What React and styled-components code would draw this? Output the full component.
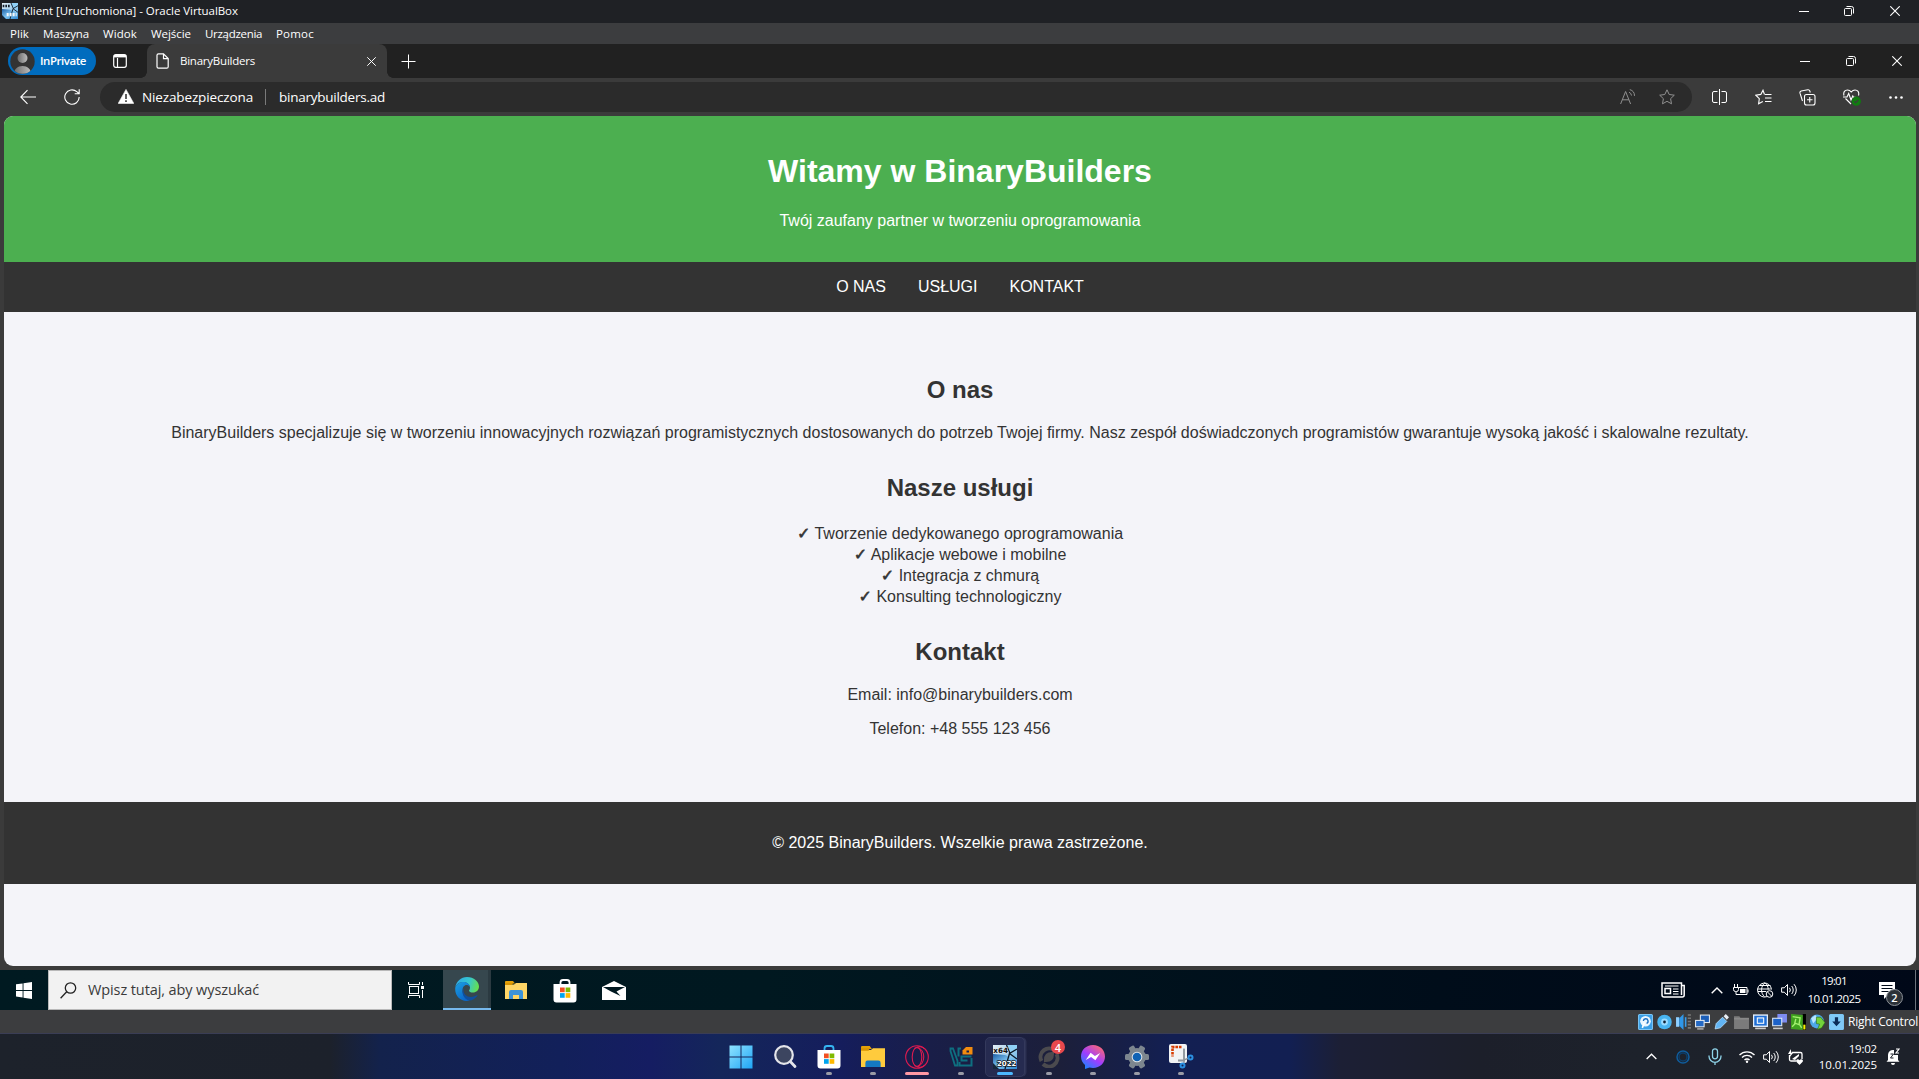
import React from "react";
import styled, { createGlobalStyle, css } from "styled-components";

const Global = createGlobalStyle`
  *, *::before, *::after { box-sizing: border-box; }
  body { margin: 0; background: #3b3b3b; overflow: hidden; }
  svg { display: block; flex: none; }
`;

const ui = `"Open Sans", "Noto Sans", sans-serif`;
const arial = `"Liberation Sans", Arial, sans-serif`;

const Screen = styled.div`
  width: 1919px;
  height: 1079px;
  display: flex;
  flex-direction: column;
  overflow: hidden;
  background: #3b3b3b;
  font-family: ${ui};
  color: #fff;
`;

/* shared pieces */
const Slot = styled.div`
  flex: none;
  width: ${(p) => p.$w}px;
  height: 100%;
  display: flex;
  align-items: center;
  justify-content: center;
`;
const Spacer = styled.div`
  flex: ${(p) => (p.$w ? "none" : "1")};
  width: ${(p) => (p.$w ? `${p.$w}px` : "auto")};
`;
const Label = styled.span`
  flex: none;
  white-space: nowrap;
  font-size: ${(p) => p.$size || 12}px;
  letter-spacing: ${(p) => p.$track || 0}px;
  color: ${(p) => p.$color || "#fff"};
  font-weight: ${(p) => p.$weight || 400};
  line-height: 16px;
`;

/* VirtualBox window */
const TitleBar = styled.header`
  flex: none;
  height: 23px;
  display: flex;
  align-items: center;
  padding: 0 0 1px 2px;
  background: #1f2125;
`;
const MenuBar = styled.nav`
  flex: none;
  height: 21px;
  display: flex;
  align-items: center;
  padding-left: 10px;
  background: #3c3d3f;
`;
const MenuItem = styled.div`
  flex: none;
  width: ${(p) => p.$w}px;
  display: flex;
`;

/* Edge */
const TabStrip = styled.div`
  flex: none;
  height: 34px;
  display: flex;
  align-items: center;
  padding-left: 8px;
  background: #212121;
`;
const Profile = styled.div`
  flex: none;
  width: 88px;
  height: 28px;
  border-radius: 14px;
  padding-left: 2px;
  display: flex;
  align-items: center;
  gap: 5px;
  background: #006cbe;
`;
const Tab = styled.div`
  flex: none;
  width: 240px;
  height: 34px;
  padding: 0 7px 0 9px;
  display: flex;
  align-items: center;
  background: #3b3b3b;
  border-radius: 8px 8px 0 0;
  position: relative;
  &::before, &::after {
    content: "";
    position: absolute;
    bottom: 0;
    width: 6px;
    height: 6px;
  }
  &::before { left: -6px; background: radial-gradient(circle at 0 0, transparent 5.5px, #3b3b3b 6px); }
  &::after { right: -6px; background: radial-gradient(circle at 100% 0, transparent 5.5px, #3b3b3b 6px); }
`;
const Toolbar = styled.div`
  flex: none;
  height: 38px;
  display: flex;
  align-items: center;
  padding-left: 6px;
  background: #3b3b3b;
`;
const AddressBar = styled.div`
  flex: none;
  width: 1592px;
  height: 30px;
  margin-top: -1px;
  border-radius: 15px;
  padding-left: 18px;
  display: flex;
  align-items: center;
  background: #2b2b2b;
`;
const Divider = styled.div`
  width: 1px;
  height: 16px;
  background: #7a7a7a;
`;
const Viewport = styled.div`
  flex: none;
  height: 854px;
  padding: 0 3px 4px 4px;
  background: #3b3b3b;
`;

/* Web page */
const Page = styled.div`
  height: 850px;
  border-radius: 9px;
  overflow: hidden;
  background: #f4f4f9;
  color: #333;
  font-family: ${arial};
  font-size: 16px;
  line-height: 18px;
  text-align: center;
`;
const Hero = styled.header`
  height: 146px;
  padding: 16px;
  background: #4caf50;
  color: #fff;
`;
const HeroTitle = styled.h1`
  margin: 21px 0 23px;
  font-size: 32px;
  line-height: 36px;
`;
const Plain = styled.p`
  margin: 0 0 16px;
`;
const SiteNav = styled.nav`
  height: 50px;
  display: flex;
  align-items: center;
  justify-content: center;
  gap: 32px;
  background: #333;
  color: #fff;
`;
const Main = styled.main`
  height: 490px;
  padding: 64px 32px;
`;
const Heading = styled.h2`
  margin: ${(p) => p.$top || 0}px 0 ${(p) => p.$bottom || 16}px;
  font-size: 24px;
  line-height: 27px;
`;
const Services = styled.ul`
  margin: 0;
  padding: 0;
  list-style: none;
  line-height: 21px;
`;
const Check = styled.span`
  font-family: "DejaVu Sans", sans-serif;
  font-size: 16px;
  line-height: 16px;
  -webkit-text-stroke: 0.6px #333;
`;
const SiteFooter = styled.footer`
  height: 82px;
  padding: 32px 16px;
  background: #333;
  color: #fff;
`;

/* Guest taskbar */
const GuestBar = styled.div`
  flex: none;
  height: 40px;
  display: flex;
  align-items: center;
  background: linear-gradient(90deg, #001a21 0%, #001820 40%, #000d1a 75%, #000818 100%);
`;
const SearchBox = styled.div`
  flex: none;
  width: 344px;
  height: 40px;
  padding-left: 11px;
  display: flex;
  align-items: center;
  gap: 11px;
  background: #f2f2f2;
  border: 1px solid #b9b9b9;
`;
const ActiveApp = styled.div`
  flex: none;
  width: 48px;
  height: 40px;
  display: flex;
  align-items: center;
  justify-content: center;
  background: #36474e;
  border-bottom: 2px solid #76b9ed;
  box-shadow: inset -3px 0 0 #2b3a41;
`;
const Clock = styled.div`
  flex: none;
  width: ${(p) => p.$w}px;
  display: flex;
  flex-direction: column;
  align-items: ${(p) => p.$align || "center"};
  gap: ${(p) => p.$gap || 0}px;
`;
const Notice = styled.div`
  flex: none;
  position: relative;
  width: 34px;
  height: 40px;
  padding: 12px 0 0 2px;
`;
const Count = styled.span`
  position: absolute;
  left: ${(p) => p.$x}px;
  top: ${(p) => p.$y}px;
  width: ${(p) => p.$d}px;
  height: ${(p) => p.$d}px;
  border-radius: 50%;
  display: flex;
  align-items: center;
  justify-content: center;
  background: ${(p) => p.$bg};
  border: ${(p) => p.$border || "none"};
  color: #fff;
  font-size: 11px;
  font-weight: 600;
  line-height: 1;
`;
const DesktopEdge = styled.div`
  width: 1px;
  height: 40px;
  background: #6c737c;
`;

/* VirtualBox status bar */
const StatusBar = styled.div`
  flex: none;
  height: 23px;
  display: flex;
  align-items: center;
  padding-left: 1636px;
  background: #3c3d3f;
`;

/* Host taskbar */
const HostBar = styled.footer`
  flex: none;
  height: 46px;
  display: flex;
  align-items: center;
  padding-left: 719px;
  border-top: 1px solid #3a3d55;
  background: linear-gradient(90deg, #1d222b 0, #1c212b 330px, #13224c 380px, #12205a 560px, #151d62 650px, #14265a 720px, #151d5c 840px, #191e48 930px, #1c1f3a 1060px, #131f52 1170px, #121f52 1290px, #1c1f35 1340px, #1c1f2a 1480px, #1d222b 1640px, #1d212a 1919px);
`;
const DockItem = styled.div`
  flex: none;
  position: relative;
  width: 44px;
  height: 45px;
  display: flex;
  align-items: center;
  justify-content: center;
  ${(p) => p.$mark && css`
    &::after {
      content: "";
      position: absolute;
      bottom: 4px;
      left: ${22 - p.$mark / 2}px;
      width: ${p.$mark}px;
      height: 3px;
      border-radius: 2px;
      background: ${p.$tone || "#9a9ba6"};
    }
  `}
`;
const DockFocus = styled.div`
  width: 40px;
  height: 40px;
  flex: none;
  display: flex;
  align-items: center;
  justify-content: center;
  border-radius: 5px;
  border: 1px solid #34395c;
  background: #262b50;
  box-shadow: 2px 0 0 -0.5px #2c3153;
`;

/* icons */
const Line = ({ w = 16, h = w, c = "#fff", s = 1, vb, children }) => (
  <svg width={w} height={h} viewBox={vb || `0 0 ${w} ${h}`} fill="none" stroke={c} strokeWidth={s}>
    {children}
  </svg>
);
const Minimise = () => <Line w={10}><path d="M0 5.5h10" /></Line>;
const Restore = () => (
  <Line w={10}>
    <rect x=".5" y="2.5" width="7" height="7" rx="1" />
    <path d="M2.5 .5H7.5a2 2 0 0 1 2 2V7.5" />
  </Line>
);
const Close = ({ w = 10, c }) => <Line w={w} vb="0 0 10 10" c={c} s={1.1}><path d="M.3 .3l9.4 9.4M9.7 .3L.3 9.7" /></Line>;

const VBoxIcon = ({ w, big }) => (
  <svg width={w} height={w} viewBox="0 0 24 24">
    <defs>
      <linearGradient id="vbt" x2="1" y2="1"><stop stopColor="#e4eef5" /><stop offset="1" stopColor="#5aaee6" /></linearGradient>
      <linearGradient id="vbb" x2="1" y2="1"><stop stopColor="#1d5fa6" /><stop offset=".5" stopColor="#7cc3f2" /><stop offset="1" stopColor="#2f86cf" /></linearGradient>
    </defs>
    <rect width="24" height="24" fill="url(#vbt)" />
    <path d="M14 0l3 8 7-3V0z" fill="#8fd0f6" />
    <path d="M0 9l12 1 12 5v9H0z" fill="url(#vbb)" />
    <path d="M0 18l6 6H0z" fill="#15283c" />
    <path d="M13.5 0l3.500 8.500M24 4L16.500 8.500 12 24M16.500 8.500L24 14" fill="none" stroke="#0b1826" strokeWidth="1.300" />
    {big ? (
      <>
        <text x=".3" y="8" fontSize="7.2" fontWeight="700" fill="#101010" stroke="#dfe9f0" strokeWidth="1" paintOrder="stroke" fontFamily="DejaVu Sans">x64</text>
        <text x="4" y="20.500" fontSize="7" fontWeight="700" fill="#fff" stroke="#10151c" strokeWidth="1.400" paintOrder="stroke" fontFamily="DejaVu Sans">2022</text>
      </>
    ) : (
      <>
        <path d="M1 4.500h12" stroke="#16202c" strokeWidth="3.500" strokeDasharray="2.500 1.500" />
        <path d="M7 17.500h15" stroke="#f2f6fa" strokeWidth="5" strokeDasharray="3 1.500" />
      </>
    )}
  </svg>
);
const Avatar = () => (
  <svg width="25" height="25" viewBox="0 0 25 25">
    <defs>
      <clipPath id="av"><circle cx="12.5" cy="12.5" r="12.2" /></clipPath>
      <linearGradient id="avg"><stop stopColor="#6b6b6b" /><stop offset="1" stopColor="#bdbdbd" /></linearGradient>
    </defs>
    <g clipPath="url(#av)">
      <rect width="25" height="25" fill="#333" />
      <circle cx="12.500" cy="9" r="5" fill="url(#avg)" />
      <path d="M4 25c0-5 3.500-8 8.500-8s8.500 3 8.500 8z" fill="url(#avg)" />
    </g>
  </svg>
);
const TabActions = () => (
  <Line w={14} s={1.2}>
    <rect x=".7" y=".7" width="12.600" height="12.600" rx="2" />
    <path d="M4.500 4v9" /><path d="M1 2.200h12" strokeWidth="2.400" />
  </Line>
);
const FileIcon = () => (
  <Line w={13} h={16} s={1.2}><path d="M2.500 .8h5l4.700 4.700v8.200a1.500 1.500 0 0 1-1.500 1.500H2.500A1.500 1.500 0 0 1 1 13.700V2.300A1.500 1.500 0 0 1 2.500 .8zM7.500 1v4.700h4.700" /></Line>
);
const Plus = () => <Line w={15}><path d="M7.500 .5v14M.5 7.500h14" /></Line>;
const Back = () => <Line w={16} s={1.1}><path d="M16 8H1M7.500 1.200L.8 8l6.700 6.800" /></Line>;
const Reload = () => <Line w={16} s={1.1}><path d="M15.200 8A7.200 7.200 0 1 1 12.800 2.700L15 4.600M15.200 .3v4.400h-4.500" /></Line>;
const Warning = () => (
  <svg width="16" height="15" viewBox="0 0 16 15">
    <path d="M8 .4L15.800 14.400H.2z" fill="#fff" stroke="#fff" strokeLinejoin="round" strokeWidth=".6" />
    <path d="M8 5v5M8 11.300v1.600" stroke="#2b2b2b" strokeWidth="1.500" />
  </svg>
);
const ReadAloud = () => (
  <Line w={16} c="#909090"><path d="M.6 15L5.600 2.500 10.600 15M2.300 10.800h6.600M9 3.200a4 4 0 0 1 2.500 3.300M9.800 .6a6.500 6.500 0 0 1 4.700 6.300" /></Line>
);
const Star = () => <Line w={16} c="#909090"><path d="M8 .8l2.200 4.700 5.100.7-3.700 3.500.9 5.100L8 12.300l-4.500 2.500.9-5.100L.7 6.200l5.100-.7z" /></Line>;
const Split = () => (
  <Line w={15} h={16}><path d="M7.500 0v16M5.500 2.500H2A1.500 1.500 0 0 0 .5 4v8A1.500 1.500 0 0 0 2 13.500h3.500M9.500 2.500H13A1.500 1.500 0 0 1 14.500 4v8a1.500 1.500 0 0 1-1.500 1.500H9.500" /></Line>
);
const Favorites = () => (
  <Line w={17} h={16} s={1.1}><path d="M9.500 5.500L8 1.200 5.800 5.400.8 6.200l3.500 3.500L3.600 14.800 7.800 12.500M10 5.500h6.500M10 9h6.500M10 12.500h6.500" /></Line>
);
const Collections = () => (
  <Line w={17} h={17} s={1.1}>
    <rect x="5.500" y="5.500" width="10.500" height="10.500" rx="2" /><path d="M10.750 8v5.500M8 10.750h5.500" />
    <path d="M3.500 12L1 4.200A1.800 1.800 0 0 1 2.200 2L8.800 .8a1.800 1.800 0 0 1 2 1.200l.5 1.500" />
  </Line>
);
const Heart = () => (
  <svg width="18" height="17" viewBox="0 0 18 17" fill="none" stroke="#fff" strokeWidth="1.100">
    <path d="M1 6.500C0 3 2 1 4.500 1 6.500 1 7.500 2 8.200 3 9 2 10 1 12 1c2.500 0 4.500 2 3.500 5.500M2.500 9.500L8 15M0 8h4l1.700-3.500L8 11l1.800-4 .8 1.200h2" />
    <circle cx="13.300" cy="12.200" r="4.600" fill="#107c10" stroke="none" />
    <path d="M11.200 12.300l1.500 1.400 2.600-2.700" stroke="#3b3b3b" />
  </svg>
);
const Dots = () => <svg width="14" height="3"><g fill="#fff"><circle cx="1.500" cy="1.500" r="1.300" /><circle cx="7" cy="1.500" r="1.300" /><circle cx="12.500" cy="1.500" r="1.300" /></g></svg>;

const Win10 = () => (
  <svg width="16" height="17" viewBox="0 0 16 17" fill="#fff"><path d="M0 2.300L6.600 1.400V8H0zM7.500 1.200L16 0v8H7.500zM0 8.900h6.600v6.600L0 14.600zM7.500 8.900H16V17l-8.500-1.300z" /></svg>
);
const SearchThin = () => <Line w={17} s={1.3} c="#222"><circle cx="10.500" cy="6" r="5.200" /><path d="M6.700 9.700L.6 16.300" /></Line>;
const TaskView = () => (
  <Line w={17} h={16}>
    <rect x="1.500" y="4.500" width="9" height="7" /><path d="M.5 0v2.500h11V0M.5 16v-2.500h11V16M14.500 0v3M14.500 8v8" /><rect x="13" y="4" width="3" height="3" fill="#fff" stroke="none" />
  </Line>
);
const EdgeLogo = () => (
  <svg width="24" height="24" viewBox="0 0 24 24">
    <defs>
      <linearGradient id="e1" x1="0" x2="1" y1=".3" y2=".5"><stop stopColor="#2fa9e6" /><stop offset=".55" stopColor="#35c6d0" /><stop offset="1" stopColor="#66e04d" /></linearGradient>
      <linearGradient id="e2" x1="0" x2=".6" y1="0" y2="1"><stop stopColor="#1ba0e2" /><stop offset="1" stopColor="#0a66c9" /></linearGradient>
    </defs>
    <path d="M.3 10.500C1.200 4.500 6 0 12 0c7 0 12 4.800 12 9.500 0 3.700-2.800 6-6 6-2.500 0-4-1-4-1.800 0-.6 1-1 1-3.200C15 7.500 12 5 8.500 5 4.500 5 1.500 7.200.3 10.500z" fill="url(#e1)" />
    <path d="M.3 10.500C1.500 7 5 5 8.500 5c3.800 0 6.500 2.700 6.500 5-1-1.500-2.300-2-3.500-2C8.500 8 6.500 12 8 16.500c1.200 3.700 4 6 6.500 7C7 25.500-.8 20 .3 10.500z" fill="url(#e2)" />
    <path d="M9 10.500c-2 4.500 1.500 9.500 7 9.500 2.800 0 4.600-1.200 5.700-1.700.7-.3 1 .3.6.8C20 22 17 23.800 14.200 23.600 8.500 21.800 5.500 15.500 9 10.500z" fill="#0f4f9f" />
  </svg>
);
const Folder = ({ w = 22, h = 18, win11 }) => (
  <svg width={w} height={h} viewBox="0 0 22 18" preserveAspectRatio="none">
    <path d="M0 1a1 1 0 0 1 1-1h7l2 2.500H0z" fill="#e3a008" />
    <path d="M0 3.500h9L11 2h11v16H0z" fill={win11 ? "#ffcb3d" : "#ffd666"} />
    <path d="M0 2h8l-1 2H0z" fill="#d89400" />
    {win11
      ? <path d="M4 18v-3.500A2 2 0 0 1 6 12.500h10a2 2 0 0 1 2 2V18z" fill="#1478c2" />
      : <path d="M4 18v-7a2 2 0 0 1 2-2h10a2 2 0 0 1 2 2v7h-4v-4H8v4z" fill="#3d93d8" />}
  </svg>
);
const Store = ({ handle = "#fff" }) => (
  <svg width="24" height="25" viewBox="0 0 24 25">
    <path d="M7.500 8V4.500A2.500 2.500 0 0 1 10 2h4a2.500 2.500 0 0 1 2.500 2.500V8" fill="none" stroke={handle} strokeWidth="1.800" />
    <path d="M.5 6h23v15.500a3 3 0 0 1-3 3h-17a3 3 0 0 1-3-3z" fill="#fff" />
    <path d="M7 9.500h4.700v4.700H7z" fill="#f25022" /><path d="M12.600 9.500h4.700v4.700h-4.700z" fill="#7fba00" />
    <path d="M7 15.100h4.700v4.700H7z" fill="#00a4ef" /><path d="M12.600 15.100h4.700v4.700h-4.700z" fill="#ffb900" />
  </svg>
);
const Mail = () => (
  <svg width="24" height="19" viewBox="0 0 24 19"><path d="M0 6L12 0l12 6v13H0z" fill="#fff" /><path d="M1 6h22l-8.500 4.500L18.500 15 9 10.500z" fill="#001820" /></svg>
);
const News = () => (
  <Line w={24} h={16} s={1.5}><path d="M20.500 3.500h2.700V13a2 2 0 0 1-2 2H3a2 2 0 0 1-2-2V1h19.500v12" /><rect x="4" y="6.500" width="5.500" height="5" /><path d="M4 4h13.500M12 7h5.500M12 9.500h5.500M12 12h5.500" strokeWidth="1.200" /></Line>
);
const Chevron = ({ w = 12 }) => <Line w={w} h={7} vb="0 0 12 7" s={1.4}><path d="M.7 6.300L6 1l5.300 5.300" /></Line>;
const Battery = () => (
  <Line w={16} h={12}><path d="M5.500 3.500h8.500v7H6M15 5.500v3" /><rect x="7" y="5" width="5.500" height="4" fill="#fff" stroke="none" /><path d="M1.500 0v3M4.500 0v3M.5 3.500h5v2a2 2 0 0 1-2 2h-1a2 2 0 0 1-2-2zM3 7.500v3h3" /></Line>
);
const GlobeOff = () => (
  <Line w={17} h={16}><path d="M10 14.600A7 7 0 1 1 14.500 7.500M8 .7C3.500 4 3.500 11.500 7.500 14.500M8 .7c2.200 1.800 3.200 4.300 3.200 6.800M2.500 3.500h11M1 9.500h8M.7 7h13" /><circle cx="12.500" cy="12" r="3.300" fill="#000a18" /><path d="M10.300 9.800l4.400 4.400" /></Line>
);
const Speaker = () => (
  <Line w={16} h={14}><path d="M.6 4.800h2.700L6.500 1.500v11L3.300 9.200H.6zM8.500 4.800a3.500 3.500 0 0 1 0 4.400M10.700 3a6 6 0 0 1 0 8M13 1.200a8.500 8.500 0 0 1 0 11.600" /></Line>
);
const Comment = () => (
  <svg width="16" height="18" viewBox="0 0 16 18"><path d="M0 0h16v13H9l-4 4v-4H0z" fill="#fff" /><path d="M2.500 3.500h11M2.500 6.500h11M2.500 9.500h7" stroke="#000a18" strokeWidth="1.200" /></svg>
);

const Chip = ({ children, bg = "#2d9be8" }) => (
  <svg width="15" height="16" viewBox="0 0 14 15">
    {bg !== "none" && <rect x=".5" y=".5" width="13" height="14" rx="1" fill={bg} stroke="#7cc6f5" />}
    {children}
  </svg>
);
const statusIcons = [
  <Chip key="hd" bg="#3a9fe6"><circle cx="7" cy="6.800" r="5" fill="#eaf6ff" /><path d="M4 13l2-5" stroke="#fff" strokeWidth="1.500" /><path d="M5 6.500a2.200 2.200 0 1 1 3 2.200" fill="none" stroke="#1b6fc0" strokeWidth="1.300" /></Chip>,
  <Chip key="cd" bg="none"><circle cx="7" cy="7.500" r="6.800" fill="#48b4ef" /><circle cx="7" cy="7.500" r="3.200" fill="#9bdcff" /><circle cx="7" cy="7.500" r="1.300" fill="#123" /></Chip>,
  <Chip key="au" bg="none"><path d="M0 3h3v9H0z" fill="#8fd0ff" /><path d="M3 4l4-4v15l-4-4z" fill="#2f97e8" /><path d="M9 3v9" stroke="#3a9ce8" strokeWidth="1.500" /><path d="M11 1h3M11 4h3M11 7h3M11 10h3M11 13h3" fill="none" stroke="#777" strokeWidth="1.500" /></Chip>,
  <Chip key="nt" bg="none"><rect x="5" y="1" width="8.500" height="7" fill="#1c5fb8" stroke="#e3e9ef" /><rect x=".5" y="6" width="8" height="6" fill="#2469c4" stroke="#e3e9ef" /><path d="M2 14h6" stroke="#ddd" /></Chip>,
  <Chip key="us" bg="none"><path d="M1 14l1-5L8 3l4 4-6 6z" fill="#62b5f3" stroke="#bfe4ff" strokeWidth=".7" /><path d="M9 2l2-2 3 3-2 2.500z" fill="#e8eef4" /></Chip>,
  <Chip key="sf" bg="none"><path d="M0 2h5l1 1.500h8V14H0z" fill="#7b7b7b" /><path d="M0 4.500h14" stroke="#8f8f8f" /></Chip>,
  <Chip key="ds" bg="none"><rect x=".5" y="1" width="13" height="10.500" fill="#1f6ed4" stroke="#e3eefa" strokeWidth="1.300" /><rect x="4" y="3.700" width="6" height="5" fill="#2e7fe0" stroke="#fff" /><path d="M2 13.500h10" stroke="#ccc" strokeWidth="1.500" /></Chip>,
  <Chip key="rc" bg="none"><rect x="5" y="0" width="9" height="8" fill="#7d8bf0" /><rect x=".6" y="4" width="8.500" height="7" fill="#1d62c9" stroke="#dbe8f7" /><path d="M1 13.500h9" stroke="#ccc" strokeWidth="1.500" /></Chip>,
  <Chip key="cp" bg="none"><rect x="11" width="3" height="15" fill="#000" /><rect x="11.500" y="10" width="2" height="4.500" fill="#f4f000" /><path d="M0 0l11 1v14L0 14z" fill="#3fa21f" /><path d="M1.500 2.500l7 1-1 6.500-4-1.500 1-4M1 12l3-3M8 10l2 3" stroke="#a4f070" fill="none" strokeWidth="1.300" /></Chip>,
  <Chip key="ms" bg="none"><circle cx="6.500" cy="7" r="6.500" fill="#4da8e8" /><path d="M1 4l4-3 2 3-4 5z" fill="#b8e6ff" /><path d="M6 6V3h4l4 5-3 5-4 1.500 2-5-3-.5z" fill="#74d23c" stroke="#2b6d10" strokeWidth=".6" /></Chip>,
  <Chip key="kb" bg="#7fcaf7"><path d="M5.500 3h3v4H11l-4 4.500L3 7h2.500z" fill="#0b2d57" /></Chip>,
];

const WinLogo = () => (
  <svg width="24" height="24" viewBox="0 0 24 24"><defs><linearGradient id="wl" x1="0" y1="0" x2="1" y2="1"><stop stopColor="#8fe3ff" /><stop offset="1" stopColor="#1fa5f5" /></linearGradient></defs><path d="M.5 .5h11v11H.5zM12.500 .5h11v11h-11zM.5 12.500h11v11H.5zM12.500 12.500h11v11h-11z" fill="url(#wl)" /></svg>
);
const SearchBold = () => <Line w={24} c="#e4e5ea" s={2.2}><circle cx="11" cy="10" r="8.800" fill="#3c4560" /><path d="M17.500 16.800l4.500 4.700" strokeWidth="2.800" strokeLinecap="round" /></Line>;
const Opera = () => <Line w={24} c="#dc1a50" s={1.1}><circle cx="12" cy="12" r="11.300" /><ellipse cx="12" cy="12" rx="4.800" ry="9.500" /><path d="M12 2.500c9 2 9 17 0 19M9.500 3.500C14 .5 18 1.500 19.500 4M9.500 20.500C14 23.500 18 22.500 19.500 20" /></Line>;
const VBLogo = () => (
  <svg width="24" height="24" viewBox="0 0 24 24" fill="none">
    <path d="M1.500 3.500H4L8.500 16V20.500H6L1.500 6z" stroke="#0e6f80" strokeWidth="1.800" />
    <path d="M12 3.500H9.500v8M22.500 11.500H12.500v4h6M22.500 13v7.500H10.500V17" stroke="#0e6f80" strokeWidth="2" />
    <path d="M13.500 9.500V5.500L17 2h6.500v7.500z" fill="#f28c0f" /><path d="M17.500 5.500h2.500V7.500h-2.500z" fill="#191e48" />
  </svg>
);
const Epic = () => (
  <svg width="22" height="22" viewBox="0 0 22 22" fill="none" stroke="#4b4a4e" strokeWidth="4"><path d="M3.500 15A8.500 8.500 0 0 1 17 5M18.500 8A8.500 8.500 0 0 1 5 18M8 14c0-4 2-6 6-6 0 4-2 6-6 6z" /></svg>
);
const Messenger = () => (
  <svg width="24" height="24" viewBox="0 0 24 24"><defs><linearGradient id="mg" x1=".1" y1="1" x2=".8" y2="0"><stop stopColor="#0a8cff" /><stop offset=".5" stopColor="#a13cff" /><stop offset="1" stopColor="#ff6a70" /></linearGradient></defs><path d="M12 0c7 0 12 5 12 11.500S19 23 12 23c-1.500 0-2.500-.2-3.500-.5L4 24v-4C1.500 18 0 15 0 11.500 0 5 5 0 12 0z" fill="url(#mg)" /><path d="M4.800 15L9.600 7.800l4.300 3.300 5.300-3.100-4.800 7.200-4.300-3.300z" fill="#fff" /></svg>
);
const Gear = () => (
  <svg width="24" height="24" viewBox="0 0 24 24"><g fill="#7d868f">{[30, 90, 150].map((a) => <rect key={a} x="9" y="0" width="6" height="24" rx="1.500" transform={`rotate(${a} 12 12)`} />)}<circle cx="12" cy="12" r="9" /></g><circle cx="12" cy="12" r="5.300" fill="#dfe5ea" /><circle cx="12" cy="12" r="4.300" fill="#0f62b4" /></svg>
);
const Snip = () => (
  <svg width="25" height="25" viewBox="0 0 25 25"><rect width="18" height="19" rx="2" fill="#f1f3f5" /><path d="M12.500 3H3.500v9.500" stroke="#d83b01" strokeWidth="2.600" strokeDasharray="2.600 .9" fill="none" /><path d="M9 16.500h6V4.500" stroke="#a8adb3" strokeWidth="2" fill="none" /><path d="M15 5v11l5-2M9 16.500h6v3" stroke="#8f969d" strokeWidth="1.500" fill="none" /><g fill="none" stroke="#2b8fe0" strokeWidth="2"><circle cx="13.500" cy="21.500" r="2" /><circle cx="21.500" cy="13.500" r="2" /></g></svg>
);
const Assistant = () => <Line w={14} c="#0f5c9c" s={1.5}><circle cx="7" cy="7" r="6" /><circle cx="7" cy="7" r="4" stroke="#0d3d68" /></Line>;
const Mic = () => <Line w={14} h={17} c="#8fd3e8" s={1.3}><rect x="4.500" y=".8" width="5" height="10" rx="2.500" /><path d="M1 7.500v.8a6 6 0 0 0 12 0v-.8M7 14.300V17" /></Line>;
const Wifi = () => <Line w={16} h={13} s={1.4}><path d="M.5 5a10.500 10.500 0 0 1 15 0M3 7.500a7 7 0 0 1 10 0M5.500 10a3.500 3.500 0 0 1 5 0" /><circle cx="8" cy="11.700" r="1.200" fill="#fff" stroke="none" /></Line>;
const HostBattery = () => (
  <svg width="17" height="16" viewBox="0 0 17 16"><path d="M4.500 3.500h9a1.500 1.500 0 0 1 1.500 1.500v5M2.500 6v4.500A1.500 1.500 0 0 0 4 12h5" fill="none" stroke="#fff" strokeWidth="1.300" /><path d="M4 0L1 5h2.500l-1.500 4L6 4H4zM5 10l7-5v2L8 11z" fill="#fff" /><path d="M12.500 16L9.300 12.700c-1-2.500 2-3.500 3.200-1.500 1-2 4.500-1 3.200 1.500z" fill="#fff" /></svg>
);
const Bell = () => (
  <svg width="14" height="17" viewBox="0 0 14 17"><path d="M2 12V7a5 5 0 0 1 6-5v5h4v5l1.500 1.700H.5zM5 15h4a2 2 0 0 1-4 0z" fill="#fff" /><path d="M4.500 6h3l-3 4h3" stroke="#1d212a" fill="none" /><path d="M10 1h3l-3 4h3" stroke="#fff" fill="none" strokeWidth="1.200" /></svg>
);

const menu = [
  { text: "Plik", width: 33, track: 0.05 },
  { text: "Maszyna", width: 60, track: -0.11 },
  { text: "Widok", width: 48, track: 0.09 },
  { text: "Wejście", width: 54, track: -0.05 },
  { text: "Urządzenia", width: 71, track: -0.3 },
  { text: "Pomoc", width: 50, track: 0.2 },
];
const services = ["Tworzenie dedykowanego oprogramowania", "Aplikacje webowe i mobilne", "Integracja z chmurą", "Konsulting technologiczny"];

export default function App() {
  return (
    <Screen>
      <Global />
      <TitleBar>
        <VBoxIcon w={16} />
        <Spacer $w={5} />
        <Label $size={11.5} $track={-0.06}>Klient [Uruchomiona] - Oracle VirtualBox</Label>
        <Spacer />
        <Slot $w={45}><Minimise /></Slot>
        <Slot $w={46}><Restore /></Slot>
        <Slot $w={46}><Close /></Slot>
        <Spacer $w={1} />
      </TitleBar>
      <MenuBar>
        {menu.map((m) => (
          <MenuItem key={m.text} $w={m.width}><Label $size={11.5} $track={m.track}>{m.text}</Label></MenuItem>
        ))}
      </MenuBar>
      <TabStrip>
        <Profile><Avatar /><Label $size={11.5} $weight={600} $track={-0.45}>InPrivate</Label></Profile>
        <Slot $w={47}><TabActions /></Slot>
        <Spacer $w={4} />
        <Tab>
          <FileIcon />
          <Spacer $w={11} />
          <Label $size={11.5} $track={-0.23}>BinaryBuilders</Label>
          <Spacer />
          <Slot $w={17}><Close w={9} /></Slot>
        </Tab>
        <Slot $w={43}><Plus /></Slot>
        <Spacer />
        <Slot $w={46}><Minimise /></Slot>
        <Slot $w={46}><Restore /></Slot>
        <Slot $w={45}><Close /></Slot>
      </TabStrip>
      <Toolbar>
        <Slot $w={44}><Back /></Slot>
        <Slot $w={44}><Reload /></Slot>
        <Spacer $w={6} />
        <AddressBar>
          <Warning />
          <Spacer $w={8} />
          <Label $size={13.5} $track={-0.13}>Niezabezpieczona</Label>
          <Spacer $w={12} />
          <Divider />
          <Spacer $w={13} />
          <Label $size={13.5} $track={-0.25}>binarybuilders.ad</Label>
          <Spacer />
          <Slot $w={39}><ReadAloud /></Slot>
          <Slot $w={40}><Star /></Slot>
          <Spacer $w={5} />
        </AddressBar>
        <Spacer $w={5} />
        <Slot $w={44}><Split /></Slot>
        <Slot $w={44}><Favorites /></Slot>
        <Slot $w={45}><Collections /></Slot>
        <Slot $w={44}><Heart /></Slot>
        <Slot $w={44}><Dots /></Slot>
      </Toolbar>

      <Viewport>
        <Page>
          <Hero>
            <HeroTitle>Witamy w BinaryBuilders</HeroTitle>
            <Plain>Twój zaufany partner w tworzeniu oprogramowania</Plain>
          </Hero>
          <SiteNav><span>O NAS</span><span>USŁUGI</span><span>KONTAKT</span></SiteNav>
          <Main>
            <Heading $bottom={21}>O nas</Heading>
            <Plain>BinaryBuilders specjalizuje się w tworzeniu innowacyjnych rozwiązań programistycznych dostosowanych do potrzeb Twojej firmy. Nasz zespół doświadczonych programistów gwarantuje wysoką jakość i skalowalne rezultaty.</Plain>
            <Heading $top={32} $bottom={22}>Nasze usługi</Heading>
            <Services>
              {services.map((s) => <li key={s}><Check>✓</Check> {s}</li>)}
            </Services>
            <Heading $top={31} $bottom={21}>Kontakt</Heading>
            <Plain>Email: info@binarybuilders.com</Plain>
            <Plain>Telefon: +48 555 123 456</Plain>
          </Main>
          <SiteFooter>© 2025 BinaryBuilders. Wszelkie prawa zastrzeżone.</SiteFooter>
        </Page>
      </Viewport>

      <GuestBar>
        <Slot $w={48}><Win10 /></Slot>
        <SearchBox><SearchThin /><Label $size={14.5} $track={-0.1} $color="#3a3a3a">Wpisz tutaj, aby wyszukać</Label></SearchBox>
        <Slot $w={49}><TaskView /></Slot>
        <Spacer $w={2} />
        <ActiveApp><EdgeLogo /></ActiveApp>
        <Slot $w={49}><Folder /></Slot>
        <Slot $w={49}><Store /></Slot>
        <Slot $w={49}><Mail /></Slot>
        <Spacer />
        <Slot $w={64}><News /></Slot>
        <Slot $w={24}><Chevron /></Slot>
        <Slot $w={24}><Battery /></Slot>
        <Slot $w={24}><GlobeOff /></Slot>
        <Slot $w={24}><Speaker /></Slot>
        <Clock $w={66} $gap={2}><Label $size={11.5} $track={-0.8}>19:01</Label><Label $size={11.5} $track={-0.55}>10.01.2025</Label></Clock>
        <Spacer $w={10} />
        <Notice><Comment /><Count $x={9} $y={19} $d={17} $bg="#2b3138" $border="1px solid #8b9097">2</Count></Notice>
        <Spacer $w={4} />
        <DesktopEdge />
        <Spacer $w={3} />
      </GuestBar>
      <StatusBar>
        {statusIcons.map((icon, i) => <Slot key={i} $w={19.1}>{icon}</Slot>)}
        <Spacer $w={2} />
        <Label $track={-0.25}>Right Control</Label>
      </StatusBar>

      <HostBar>
        <DockItem><WinLogo /></DockItem>
        <DockItem><SearchBold /></DockItem>
        <DockItem $mark={6}><Store handle="#35b5f2" /></DockItem>
        <DockItem $mark={6}><Folder w={24} h={21} win11 /></DockItem>
        <DockItem $mark={24} $tone="#ff98a4"><Opera /></DockItem>
        <DockItem $mark={6}><VBLogo /></DockItem>
        <DockItem $mark={16} $tone="#4cb8ff"><DockFocus><VBoxIcon w={24} big /></DockFocus></DockItem>
        <DockItem $mark={6}><Epic /><Count $x={24} $y={6} $d={14} $bg="#e8484d">4</Count></DockItem>
        <DockItem $mark={6}><Messenger /></DockItem>
        <DockItem $mark={6}><Gear /></DockItem>
        <DockItem $mark={6}><Snip /></DockItem>
        <Spacer />
        <Slot $w={32}><Chevron w={11} /></Slot>
        <Slot $w={32}><Assistant /></Slot>
        <Slot $w={32}><Mic /></Slot>
        <Spacer $w={4} />
        <Slot $w={24}><Wifi /></Slot>
        <Slot $w={24}><Speaker /></Slot>
        <Slot $w={24}><HostBattery /></Slot>
        <Clock $w={70} $align="flex-end"><Label $size={11.5} $track={-0.2}>19:02</Label><Label $size={11.5} $track={-0.05}>10.01.2025</Label></Clock>
        <Slot $w={32}><Bell /></Slot>
        <Spacer $w={10} />
      </HostBar>
    </Screen>
  );
}
